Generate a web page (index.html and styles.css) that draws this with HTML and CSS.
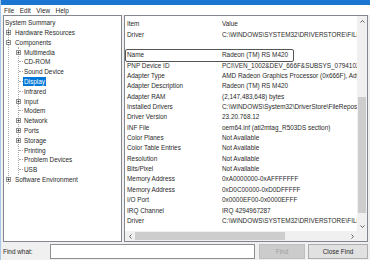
FILE: index.html
```html
<!DOCTYPE html>
<html>
<head>
    <meta charset="utf-8">
    <link rel="stylesheet" href="styles.css">
</head>
<body>
    <div class="window">
        <div class="titlebar"></div>
        <div class="menubar">
            <span>File</span>
            <span>Edit</span>
            <span>View</span>
            <span>Help</span>
        </div>

        <div class="main">
            <div class="tree-pane">
                <div class="node root">System Summary</div>
                <div class="branch">
                    <div class="node">
                        <span class="twisty"><svg class="expander" width="5" height="5" viewBox="0 0 5 5"><rect x="0.5" y="0.5" width="4" height="4" fill="#fff" stroke="#919191"/><path d="M1.5 2.5h2M2.5 1.5v2" stroke="#333"/></svg></span>
                        <span class="label">Hardware Resources</span>
                    </div>
                    <div class="node">
                        <span class="twisty"><svg class="expander" width="5" height="5" viewBox="0 0 5 5"><rect x="0.5" y="0.5" width="4" height="4" fill="#fff" stroke="#919191"/><path d="M1.5 2.5h2" stroke="#333"/></svg></span>
                        <span class="label">Components</span>
                    </div>
                    <div class="branch sub">
                        <div class="node">
                            <span class="twisty"><svg class="expander" width="5" height="5" viewBox="0 0 5 5"><rect x="0.5" y="0.5" width="4" height="4" fill="#fff" stroke="#919191"/><path d="M1.5 2.5h2M2.5 1.5v2" stroke="#333"/></svg></span>
                            <span class="label">Multimedia</span>
                        </div>
                        <div class="node"><span class="twisty"><span class="leaf-line"></span></span><span class="label">CD-ROM</span></div>
                        <div class="node"><span class="twisty"><span class="leaf-line"></span></span><span class="label">Sound Device</span></div>
                        <div class="node selected"><span class="twisty"><span class="leaf-line"></span></span><span class="label">Display</span></div>
                        <div class="node"><span class="twisty"><span class="leaf-line"></span></span><span class="label">Infrared</span></div>
                        <div class="node">
                            <span class="twisty"><svg class="expander" width="5" height="5" viewBox="0 0 5 5"><rect x="0.5" y="0.5" width="4" height="4" fill="#fff" stroke="#919191"/><path d="M1.5 2.5h2M2.5 1.5v2" stroke="#333"/></svg></span>
                            <span class="label">Input</span>
                        </div>
                        <div class="node"><span class="twisty"><span class="leaf-line"></span></span><span class="label">Modem</span></div>
                        <div class="node">
                            <span class="twisty"><svg class="expander" width="5" height="5" viewBox="0 0 5 5"><rect x="0.5" y="0.5" width="4" height="4" fill="#fff" stroke="#919191"/><path d="M1.5 2.5h2M2.5 1.5v2" stroke="#333"/></svg></span>
                            <span class="label">Network</span>
                        </div>
                        <div class="node">
                            <span class="twisty"><svg class="expander" width="5" height="5" viewBox="0 0 5 5"><rect x="0.5" y="0.5" width="4" height="4" fill="#fff" stroke="#919191"/><path d="M1.5 2.5h2M2.5 1.5v2" stroke="#333"/></svg></span>
                            <span class="label">Ports</span>
                        </div>
                        <div class="node">
                            <span class="twisty"><svg class="expander" width="5" height="5" viewBox="0 0 5 5"><rect x="0.5" y="0.5" width="4" height="4" fill="#fff" stroke="#919191"/><path d="M1.5 2.5h2M2.5 1.5v2" stroke="#333"/></svg></span>
                            <span class="label">Storage</span>
                        </div>
                        <div class="node"><span class="twisty"><span class="leaf-line"></span></span><span class="label">Printing</span></div>
                        <div class="node"><span class="twisty"><span class="leaf-line"></span></span><span class="label">Problem Devices</span></div>
                        <div class="node"><span class="twisty"><span class="leaf-line"></span></span><span class="label">USB</span></div>
                    </div>
                    <div class="node">
                        <span class="twisty"><svg class="expander" width="5" height="5" viewBox="0 0 5 5"><rect x="0.5" y="0.5" width="4" height="4" fill="#fff" stroke="#919191"/><path d="M1.5 2.5h2M2.5 1.5v2" stroke="#333"/></svg></span>
                        <span class="label">Software Environment</span>
                    </div>
                </div>
            </div>

            <div class="list-pane">
                <div class="list">
                    <div class="list-row list-head"><span class="col-item">Item</span><span class="col-value">Value</span></div>
                    <div class="list-row"><span class="col-item">Driver</span><span class="col-value">C:\WINDOWS\SYSTEM32\DRIVERSTORE\FILEREPOSITORY\C0327567.INF_AMD64_A40E2B0FB5E4DE10\ATIKMPAG.SYS</span></div>
                    <div class="list-row"><span class="col-item"></span><span class="col-value"></span></div>
                    <div class="list-row"><span class="col-item">Name</span><span class="col-value">Radeon (TM) RS M420</span></div>
                    <div class="list-row"><span class="col-item">PNP Device ID</span><span class="col-value">PCI\VEN_1002&amp;DEV_666F&amp;SUBSYS_07941028&amp;REV_C3\4&amp;2F5E2A3C&amp;0&amp;0008</span></div>
                    <div class="list-row"><span class="col-item">Adapter Type</span><span class="col-value">AMD Radeon Graphics Processor (0x666F), Advanced Micro Devices, Inc. compatible</span></div>
                    <div class="list-row"><span class="col-item">Adapter Description</span><span class="col-value">Radeon (TM) RS M420</span></div>
                    <div class="list-row"><span class="col-item">Adapter RAM</span><span class="col-value">(2,147,483,648) bytes</span></div>
                    <div class="list-row"><span class="col-item">Installed Drivers</span><span class="col-value">C:\WINDOWS\System32\DriverStore\FileRepository\c0327567.inf_amd64</span></div>
                    <div class="list-row"><span class="col-item">Driver Version</span><span class="col-value">23.20.768.12</span></div>
                    <div class="list-row"><span class="col-item">INF File</span><span class="col-value">oem64.inf (ati2mtag_R503DS section)</span></div>
                    <div class="list-row"><span class="col-item">Color Planes</span><span class="col-value">Not Available</span></div>
                    <div class="list-row"><span class="col-item">Color Table Entries</span><span class="col-value">Not Available</span></div>
                    <div class="list-row"><span class="col-item">Resolution</span><span class="col-value">Not Available</span></div>
                    <div class="list-row"><span class="col-item">Bits/Pixel</span><span class="col-value">Not Available</span></div>
                    <div class="list-row"><span class="col-item">Memory Address</span><span class="col-value">0xA0000000-0xAFFFFFFF</span></div>
                    <div class="list-row"><span class="col-item">Memory Address</span><span class="col-value">0xD0C00000-0xD0DFFFFF</span></div>
                    <div class="list-row"><span class="col-item">I/O Port</span><span class="col-value">0x0000EF00-0x0000EFFF</span></div>
                    <div class="list-row"><span class="col-item">IRQ Channel</span><span class="col-value">IRQ 4294967287</span></div>
                    <div class="list-row"><span class="col-item">Driver</span><span class="col-value">C:\WINDOWS\SYSTEM32\DRIVERSTORE\FILEREPOSITORY\C0327567.INF_AMD64_A40E2B0FB5E4DE10\ATIKMDAG.SYS</span></div>

                    <!-- annotation box round the Name row -->
                    <div class="name-box"></div>
                </div>

                <div class="vscroll">
                    <div class="arrow"><svg width="5" height="3" viewBox="0 0 5 3"><path d="M0.5 2.5L2.5 0.5L4.5 2.5" fill="none" stroke="#606060"/></svg></div>
                    <div class="vthumb"></div>
                    <div class="arrow arrow-end"><svg width="5" height="3" viewBox="0 0 5 3"><path d="M0.5 0.5L2.5 2.5L4.5 0.5" fill="none" stroke="#606060"/></svg></div>
                </div>
                <div class="hscroll">
                    <div class="arrow"><svg width="3" height="5" viewBox="0 0 3 5"><path d="M2.5 0.5L0.5 2.5L2.5 4.5" fill="none" stroke="#606060"/></svg></div>
                    <div class="hthumb"></div>
                    <div class="arrow arrow-end"><svg width="3" height="5" viewBox="0 0 3 5"><path d="M0.5 0.5L2.5 2.5L0.5 4.5" fill="none" stroke="#606060"/></svg></div>
                </div>
                <div class="corner"></div>
            </div>
        </div>

        <div class="find-bar">
            <span class="find-label">Find what:</span>
            <div class="find-input"></div>
            <div class="btn btn-disabled">Find</div>
            <div class="btn btn-close">Close Find</div>
        </div>
    </div>
</body>
</html>
```

FILE: styles.css
```css
* {
    box-sizing: border-box;
}

body {
    width: 370px;
    height: 260px;
    margin: 0;
    overflow: hidden;
    background: #f0f0f0;
    font-family: "Liberation Sans", Arial, sans-serif;
    font-size: 6.4px;
    color: #2a2a2a;
}

.window {
    height: 260px;
    display: flex;
    flex-direction: column;
    border-left: 1px solid #a9c8ea;
}

.titlebar {
    flex: none;
    height: 5px;
    background: #1b76d1;
}

.menubar {
    flex: none;
    height: 10px;
    background: #fff;
    display: flex;
    align-items: center;
    gap: 5.5px;
    padding-left: 3px;
}

.main {
    flex: none;
    height: 227px;
    display: flex;
    gap: 2px;
    padding-left: 2px;
}

/* Tree */
.tree-pane {
    width: 119px;
    flex: none;
    background: #fff;
    border: 1px solid #828790;
    padding-top: 1.8px;
    overflow: hidden;
}

.node {
    height: 9.8px;
    display: flex;
    align-items: center;
    white-space: nowrap;
}

.root {
    padding-left: 1px;
}

.branch {
    margin-left: 4px;
    border-left: 1px dotted #a8a8a8;
}

.branch.sub {
    margin-left: 9px;
}

.twisty {
    width: 6px;
    flex: none;
    display: flex;
    align-items: center;
}

.sub .twisty {
    width: 5px;
}

.expander {
    display: block;
    flex: none;
    margin-left: -3px;
}

.leaf-line {
    width: 4px;
    border-top: 1px dotted #a8a8a8;
}

.selected .label {
    background: #0078d7;
    color: #fff;
    margin-left: -1px;
    padding: 0 1px;
    line-height: 9.5px;
}

/* List */
.list-pane {
    width: 244px;
    flex: none;
    background: #fff;
    border: 1px solid #828790;
    display: grid;
    grid-template-columns: minmax(0, 1fr) 10px;
    grid-template-rows: minmax(0, 1fr) 10px;
}

.list {
    position: relative;
    overflow: hidden;
}

.list-row {
    height: 10.35px;
    display: flex;
    align-items: center;
    white-space: nowrap;
}

.list-head {
    height: 13px;
    padding-top: 1px;
}

.col-item {
    width: 95px;
    flex: none;
    padding-left: 2px;
}

.col-value {
    padding-left: 2px;
}

.name-box {
    position: absolute;
    left: 0;
    top: 33px;
    width: 169px;
    height: 13px;
    border: 1.5px solid #555;
    border-radius: 2px;
}

.vscroll {
    background: #f0f0f0;
    display: flex;
    flex-direction: column;
}

.hscroll {
    background: #f0f0f0;
    display: flex;
}

.arrow {
    flex: none;
    width: 10px;
    height: 10px;
    display: flex;
    align-items: center;
    justify-content: center;
}

.arrow-end {
    margin-top: auto;
    margin-left: auto;
}

.vthumb {
    height: 116px;
    margin: 71px 1px 0;
    background: #cdcdcd;
}

.hthumb {
    width: 150px;
    margin: 1px 0;
    background: #cdcdcd;
}

.corner {
    background: #f0f0f0;
}

/* Find bar */
.find-bar {
    flex: 1;
    display: flex;
    align-items: center;
    padding-left: 2px;
}

.find-label {
    width: 47px;
    flex: none;
}

.find-input {
    width: 205px;
    height: 15px;
    background: #fff;
    border: 1px solid #8f8f8f;
}

.btn {
    height: 15px;
    display: flex;
    align-items: center;
    justify-content: center;
    background: #e1e1e1;
    border: 1px solid #adadad;
}

.btn-disabled {
    width: 46px;
    margin-left: 4px;
    background: #cccccc;
    border-color: #bfbfbf;
    color: #a0a0a0;
}

.btn-close {
    width: 60px;
    margin-left: 3px;
}
```
